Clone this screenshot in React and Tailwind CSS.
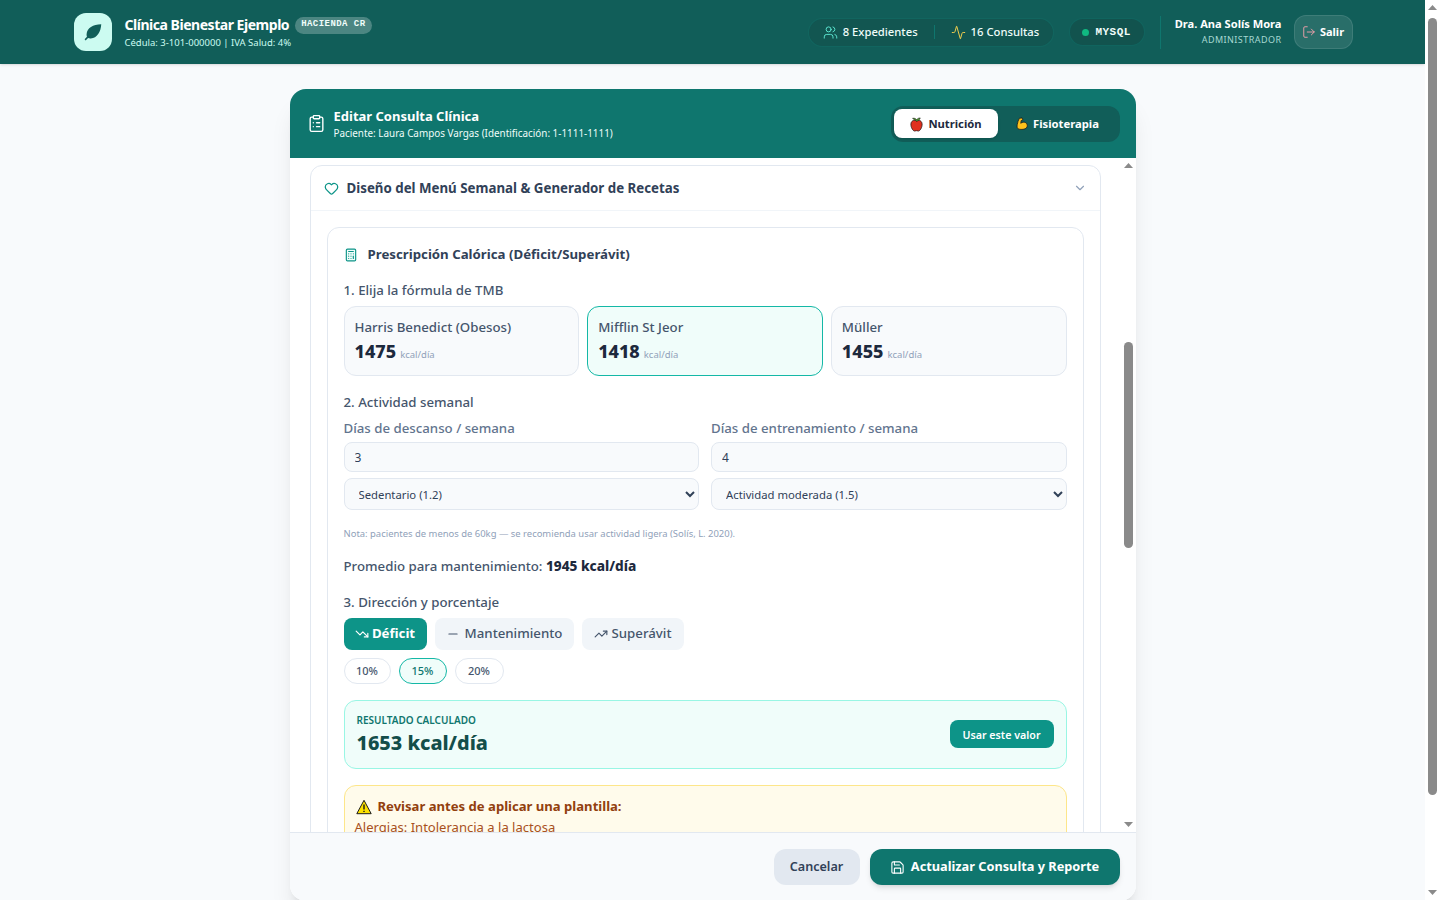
import { Users, Activity, LogOut, ClipboardList, Heart, ChevronDown, Calculator, TrendingDown, TrendingUp, Minus, Save } from 'lucide-react';

const Leaf = () => (
  <svg viewBox="0 0 24 24" className="w-[22px] h-[22px] text-[#115e59]" fill="currentColor">
    <path d="M21 3.500C12 3.500 5.500 7.500 5 14.500c-.1 1 .1 2 .4 2.800L2.800 20l1.200 1.200 2.600-2.600c.9.4 1.900.6 3 .5C16.500 18.500 20.500 12 21 3.500z" />
  </svg>
);

const Apple = () => (
  <svg viewBox="0 0 16 16" className="w-[15px] h-[15px]">
    <path d="M8 4.200C6.500 3 2.300 3.200 2 7.500c-.2 3.500 2.200 7.500 4 7.500.8 0 1.300-.4 2-.4s1.200.4 2 .4c1.800 0 4.200-4 4-7.500-.3-4.300-4.500-4.500-6-3.300z" fill="#e0301e" stroke="#1c1c1c" strokeWidth="0.8" />
    <path d="M8 4.500C6.500 3 5 2.500 3.800 1.500 5.500 1 7.500 1.500 8 3c1-1.500 2.500-2 4-2-.5 2-2.500 3.500-4 3.500z" fill="#4f9e2d" stroke="#1c1c1c" strokeWidth="0.6" />
  </svg>
);

const Bicep = () => (
  <svg viewBox="0 0 16 16" className="w-[14px] h-[14px]">
    <path d="M5 1.500 8 1l1 2.200-2 1-.4 3c1.500-1.400 4-1.800 5.800-.6 2 1.300 2.100 4.300.6 6-1.500 1.500-5.500 2-8.500 1.300C2.300 13.300 2 11 2.600 8.500 3 6 3.800 3.500 5 1.500z" fill="#fcc21b" stroke="#1c1c1c" strokeWidth="0.9" strokeLinejoin="round" />
  </svg>
);

const WarnSign = () => (
  <svg viewBox="0 0 16 16" className="w-[16px] h-[16px] shrink-0">
    <path d="M8 1.300 15.200 14.700H.8z" fill="#fde100" stroke="#1c1c1c" strokeWidth="1" strokeLinejoin="round" />
    <path d="M8 5.500v5M8 11.700v1.300" stroke="#1c1c1c" strokeWidth="1.400" />
  </svg>
);

const Arrow = ({ down }) => (
  <div className="h-[15px] flex items-center justify-center">
    <svg viewBox="0 0 9 5" className={`w-[9px] h-[5px] text-[#8a8a8a] ${down ? 'rotate-180' : ''}`} fill="currentColor"><path d="M4.500 0 9 5H0z" /></svg>
  </div>
);

// barra de desplazamiento tal como aparece en la captura
const ScrollStrip = ({ offset, thumb }) => (
  <div className="w-[15px] shrink-0 bg-white flex flex-col items-center">
    <Arrow />
    <div className="flex-1">
      <div className={offset} />
      <div className={`w-[9px] rounded-full bg-[#8a8a8a] ${thumb}`} />
    </div>
    <Arrow down />
  </div>
);

const formulas = [
  { name: 'Harris Benedict (Obesos)', kcal: 1475 },
  { name: 'Mifflin St Jeor', kcal: 1418, active: true },
  { name: 'Müller', kcal: 1455 },
];

export default function App() {
  return (
    <div className="h-screen flex overflow-hidden bg-[#f8fafc] text-slate-800 font-['Noto_Sans',sans-serif]">
      <div className="flex-1 min-w-0">
        <header className="h-16 bg-[#115e59] shadow-sm text-white">
          <div className="max-w-7xl h-full mx-auto flex items-center justify-between pl-px">
            <div className="flex items-center gap-[13px]">
              <div className="w-[38px] h-[38px] rounded-xl bg-[#ccfbf1] flex items-center justify-center"><Leaf /></div>
              <div className="pt-[2px]">
                <div className="flex items-center gap-[6px]">
                  <span className="text-sm font-bold leading-5 tracking-[-0.47px]">Clínica Bienestar Ejemplo</span>
                  <span className="h-[17px] px-[6px] rounded-full bg-white/25 text-teal-50 text-[9px] font-bold tracking-[0.45px] flex items-center font-['Liberation_Mono',monospace]">HACIENDA CR</span>
                </div>
                <div className="text-[9.5px] leading-4 text-[#ccfbf1]">Cédula: 3-101-000000 | IVA Salud: 4%</div>
              </div>
            </div>
            <div className="flex items-center">
              <div className="h-[29px] w-[246px] rounded-full bg-[#134e4a]/50 border border-[#0f766e]/50 flex items-center pl-[14px] text-[11.25px] font-medium text-teal-50">
                <Users className="w-[15px] h-[15px] text-[#5eead4] mr-[5px]" strokeWidth={1.5} />
                <span>8 Expedientes</span>
                <span className="w-px h-[14px] bg-[#0f766e] ml-[16px] mr-[16px]" />
                <Activity className="w-[15px] h-[15px] text-[#fcd34d] mr-[5px]" strokeWidth={1.5} />
                <span>16 Consultas</span>
              </div>
              <div className="ml-[15px] h-[28px] w-[76px] rounded-full bg-[#134e4a]/70 border border-[#0f766e]/50 flex items-center justify-center gap-[6px] text-[11px] tracking-[0.5px] font-bold text-teal-50 font-['Liberation_Mono',monospace]">
                <span className="w-[7px] h-[7px] rounded-full bg-[#10b981]" />
                MYSQL
              </div>
              <div className="w-px h-[33px] bg-[#0f766e] ml-[15px] mr-[14px]" />
              <div className="text-right">
                <div className="text-[11.1px] font-bold leading-4">Dra. Ana Solís Mora</div>
                <div className="text-[9px] leading-[16px] tracking-[0.45px] text-[#a7d8d2]">ADMINISTRADOR</div>
              </div>
              <button className="ml-3 h-[34px] w-[59px] rounded-xl bg-white/10 border border-white/10 flex items-center justify-center gap-[4px] text-[11px] font-bold">
                <LogOut className="w-[14px] h-[14px] text-[#fda4af]" strokeWidth={1.5} />
                Salir
              </button>
            </div>
          </div>
        </header>

        <main className="pt-[25px]">
          <div className="w-[846px] mx-auto rounded-2xl bg-white shadow-xl overflow-hidden">
            <div className="h-[69px] bg-[#0f766e] text-white flex items-center justify-between pl-[17px] pr-4">
              <div className="flex items-center gap-[8px]">
                <ClipboardList className="w-[19px] h-[19px]" strokeWidth={1.75} />
                <div>
                  <div className="text-[13px] font-bold leading-[18px]">Editar Consulta Clínica</div>
                  <div className="text-[9.9px] leading-4 text-teal-50">Paciente: Laura Campos Vargas (Identificación: 1-1111-1111)</div>
                </div>
              </div>
              <div className="h-9 w-[229px] rounded-xl bg-[#115e59] flex items-center p-[3px] text-[11.25px] font-bold">
                <button className="h-[29px] w-[104px] pt-px rounded-lg bg-white text-slate-800 shadow-sm flex items-center justify-center gap-[4px]"><Apple />Nutrición</button>
                <button className="h-[29px] flex-1 pt-px text-white flex items-center justify-center gap-[4px]"><Bicep />Fisioterapia</button>
              </div>
            </div>

            <div className="h-[674px] flex">
              <div className="flex-1 min-w-0 overflow-hidden px-5 pt-[7px]">
                <div className="rounded-xl border border-slate-200 bg-white">
                  <div className="h-[45px] border-b border-slate-100 flex items-center justify-between pl-[13px] pr-[13px]">
                    <div className="flex items-center gap-[8px]">
                      <Heart className="w-[15px] h-[15px] text-[#0d9488]" strokeWidth={2} />
                      <span className="pt-px text-[13.3px] font-bold text-slate-700">Diseño del Menú Semanal &amp; Generador de Recetas</span>
                    </div>
                    <ChevronDown className="w-[14px] h-[14px] text-slate-400" />
                  </div>
                  <div className="p-4">
                    <div className="rounded-xl border border-slate-200 p-4">
                      <div className="flex items-center gap-[10px] text-[13.25px] font-bold text-slate-700 mt-[1px]">
                        <Calculator className="w-[14px] h-[14px] text-[#0d9488] fill-[#f0fdfa]" strokeWidth={2} />
                        Prescripción Calórica (Déficit/Superávit)
                      </div>

                      <p className="mt-4 text-[13.25px] leading-[18px] font-medium text-slate-600">1. Elija la fórmula de TMB</p>
                      <div className="mt-[7px] grid grid-cols-3 gap-2">
                        {formulas.map(f => (
                          <div key={f.name} className={`h-[70px] rounded-xl border px-[10px] pt-[11px] ${f.active ? 'border-[#14b8a6] bg-[#f0fdfa]' : 'border-slate-200 bg-slate-50'}`}>
                            <div className="text-[13.25px] leading-[18px] font-medium text-slate-600">{f.name}</div>
                            <div className="mt-[3px] flex items-baseline gap-[4px]">
                              <span className="text-lg leading-6 font-extrabold text-slate-800">{f.kcal}</span>
                              <span className="text-[9.5px] text-slate-400">kcal/día</span>
                            </div>
                          </div>
                        ))}
                      </div>

                      <p className="mt-[17px] text-[13.25px] leading-[18px] font-medium text-slate-600">2. Actividad semanal</p>
                      <div className="mt-2 grid grid-cols-2 gap-3">
                        {[
                          { label: 'Días de descanso / semana', value: '3', level: 'Sedentario (1.2)' },
                          { label: 'Días de entrenamiento / semana', value: '4', level: 'Actividad moderada (1.5)' },
                        ].map(c => (
                          <div key={c.label}>
                            <label className="block text-[13.25px] leading-[18px] font-medium text-slate-500">{c.label}</label>
                            <input readOnly value={c.value} className="mt-[5px] block w-full h-[30px] rounded-lg border border-slate-200 bg-slate-50 px-[10px] pt-[2px] text-xs text-slate-700" />
                            <select defaultValue={c.level} className="mt-[6px] block w-full h-[32px] rounded-lg border border-slate-200 bg-slate-50 px-[10px] pt-[2px] text-[11.3px] text-slate-700">
                              <option>{c.level}</option>
                            </select>
                          </div>
                        ))}
                      </div>
                      <p className="mt-[17px] text-[9.45px] leading-[14px] text-slate-400">Nota: pacientes de menos de 60kg — se recomienda usar actividad ligera (Solís, L. 2020).</p>
                      <p className="mt-[16px] text-[13.25px] leading-[18px] font-medium text-slate-600">Promedio para mantenimiento: <strong className="text-[13.6px] font-extrabold text-slate-800">1945 kcal/día</strong></p>

                      <p className="mt-[18px] text-[13.25px] leading-[18px] font-medium text-slate-600">3. Dirección y porcentaje</p>
                      <div className="mt-[7px] flex gap-2 text-[13.25px] font-medium">
                        <button className="h-8 w-[83px] pt-px rounded-lg bg-[#0d9488] text-white font-bold flex items-center justify-center gap-[3px]"><TrendingDown className="w-[14px] h-[14px]" />Déficit</button>
                        <button className="h-8 w-[139px] pt-px rounded-lg bg-slate-100 text-slate-600 flex items-center justify-center gap-[5px]"><Minus className="w-[14px] h-[14px]" />Mantenimiento</button>
                        <button className="h-8 w-[102px] pt-px rounded-lg bg-slate-100 text-slate-600 flex items-center justify-center gap-[4px]"><TrendingUp className="w-[14px] h-[14px]" />Superávit</button>
                      </div>
                      <div className="mt-2 flex gap-2 text-[11px] font-medium text-slate-600">
                        <button className="h-[26px] w-[47px] rounded-full border border-slate-200">10%</button>
                        <button className="h-[26px] w-[48px] rounded-full border border-[#14b8a6] bg-[#f0fdfa] text-[#0f766e]">15%</button>
                        <button className="h-[26px] w-[49px] rounded-full border border-slate-200">20%</button>
                      </div>

                      <div className="mt-4 h-[69px] rounded-xl border border-[#99f6e4] bg-[#f0fdfa] flex items-center justify-between px-3">
                        <div>
                          <div className="text-[10px] leading-[14px] font-semibold text-[#0f766e]">RESULTADO CALCULADO</div>
                          <div className="text-[19.8px] leading-6 font-extrabold text-[#134e4a] mt-[4px]">1653 kcal/día</div>
                        </div>
                        <button className="h-[28px] w-[104px] pt-px rounded-lg bg-[#0d9488] text-white text-[10.7px] font-semibold">Usar este valor</button>
                      </div>

                      <div className="mt-4 rounded-xl border border-[#fde68a] bg-[#fffbeb] px-[10px] pt-[11px] pb-3">
                        <div className="flex items-center gap-[6px] text-[13.1px] font-bold text-[#92400e] pl-[1px]"><WarnSign />Revisar antes de aplicar una plantilla:</div>
                        <div className="text-[13.05px] leading-5 text-[#a8501c]">Alergias: Intolerancia a la lactosa</div>
                      </div>
                    </div>
                  </div>
                </div>
              </div>
              <ScrollStrip offset="h-[169px]" thumb="h-[206px]" />
            </div>

            <div className="h-[69px] border-t border-slate-200 bg-slate-50 flex items-center justify-end gap-[10px] pr-4">
              <button className="h-9 w-[86px] rounded-xl bg-slate-200 text-slate-700 text-[12.6px] font-semibold">Cancelar</button>
              <button className="h-9 w-[250px] rounded-xl bg-[#0f766e] text-white text-[12.75px] font-bold shadow-md flex items-center justify-center gap-[6px]"><Save className="w-[15px] h-[15px]" strokeWidth={1.75} />Actualizar Consulta y Reporte</button>
            </div>
          </div>
        </main>
      </div>
      <ScrollStrip offset="h-[3px]" thumb="h-[777px]" />
    </div>
  );
}
